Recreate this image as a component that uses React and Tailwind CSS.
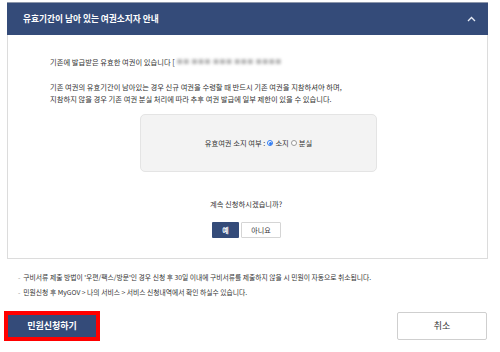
import React from "react";

function Radio({ checked }) {
  return (
    <span
      className={`inline-flex items-center justify-center w-[6px] h-[6px] rounded-full border ${
        checked ? "border-[#2f7bf2]" : "border-[#999]"
      } bg-white`}
    >
      {checked && <span className="w-[3px] h-[3px] rounded-full bg-[#2f7bf2]" />}
    </span>
  );
}

export default function App() {
  return (
    <div className="w-[500px] h-[352px] bg-white text-[#333] font-['Noto_Sans_CJK_KR','Noto_Sans',sans-serif] overflow-hidden">
      <div className="pt-[2px] pl-[7px] pr-[12px]">
        <div className="h-[33px] border-t border-[#8d97ab] bg-[#344b79] flex items-center justify-between pl-[16px] pr-[12px]">
          <h2 className="text-white font-bold text-[8.7px] leading-none">
            유효기간이 남아 있는 여권소지자 안내
          </h2>
          <svg width="9" height="6" viewBox="0 0 9 6" fill="none">
            <path d="M1 5 4.5 1.5 8 5" stroke="#e6ebf5" strokeWidth="1.3" />
          </svg>
        </div>

        <div className="h-[224px] border-x border-b border-[#dcdcdc] pt-[21px] pl-[42px] text-[7.3px] leading-[12px]">
          <p className="flex items-center">
            <span>기존에 발급받은 유효한 여권이 있습니다 [</span>
            <span className="ml-[2px] blur-[1.5px] text-[#b5b5b5] text-[6px] tracking-[0.5px]">
              ■■ ■■■ ■■■ ■■■ ■■■■
            </span>
          </p>
          <p className="mt-[13px]">
            기존 여권의 유효기간이 남아있는 경우 신규 여권을 수령할 때 반드시 기존 여권을 지참하셔야 하며,
          </p>
          <p>
            지참하지 않을 경우 기존 여권 분실 처리에 따라 추후 여권 발급에 일부 제한이 있을 수 있습니다.
          </p>

          <div className="mt-[9px] ml-[90px] w-[237px] h-[58px] bg-[#f3f3f3] border border-[#e4e4e4] rounded-[5px] flex items-center justify-center gap-[2px]">
            <span>유효여권 소지 여부 :</span>
            <Radio checked />
            <span>소지</span>
            <Radio />
            <span>분실</span>
          </div>

          <p className="mt-[26px] ml-[160px]">계속 신청하시겠습니까?</p>

          <div className="mt-[12px] ml-[162px] flex gap-[2px]">
            <button className="w-[27px] h-[16px] bg-[#344b79] text-white text-[7px] font-bold rounded-[1px]">
              예
            </button>
            <button className="w-[40px] h-[16px] bg-white border border-[#d5d5d5] text-[7px] rounded-[1px]">
              아니요
            </button>
          </div>
        </div>

        <ul className="mt-[12px] pl-[11px] text-[6.8px] leading-[12px] flex flex-col gap-[3px]">
          <li className="flex gap-[3px]">
            <span className="text-[#999]">-</span>
            <span>
              구비서류 제출 방법이 '우편/팩스/방문'인 경우 신청 후 30일 이내에 구비서류를 제출하지 않을 시 민원이 자동으로 취소됩니다.
            </span>
          </li>
          <li className="flex gap-[3px]">
            <span className="text-[#999]">-</span>
            <span>민원신청 후 MyGOV &gt; 나의 서비스 &gt; 서비스 신청내역에서 확인 하실수 있습니다.</span>
          </li>
        </ul>
      </div>

      <div className="mt-[13px] pl-[4px] pr-[13px] flex items-start justify-between">
        <div className="border-[4px] border-[#ff0000]">
          <button className="w-[88px] h-[22px] bg-[#344b79] text-white text-[9px] font-bold flex items-center justify-center">
            민원신청하기
          </button>
        </div>
        <button className="mt-[1px] w-[90px] h-[28px] bg-white border border-[#cfcfcf] rounded-[2px] text-[9px] text-[#333]">
          취소
        </button>
      </div>
    </div>
  );
}
